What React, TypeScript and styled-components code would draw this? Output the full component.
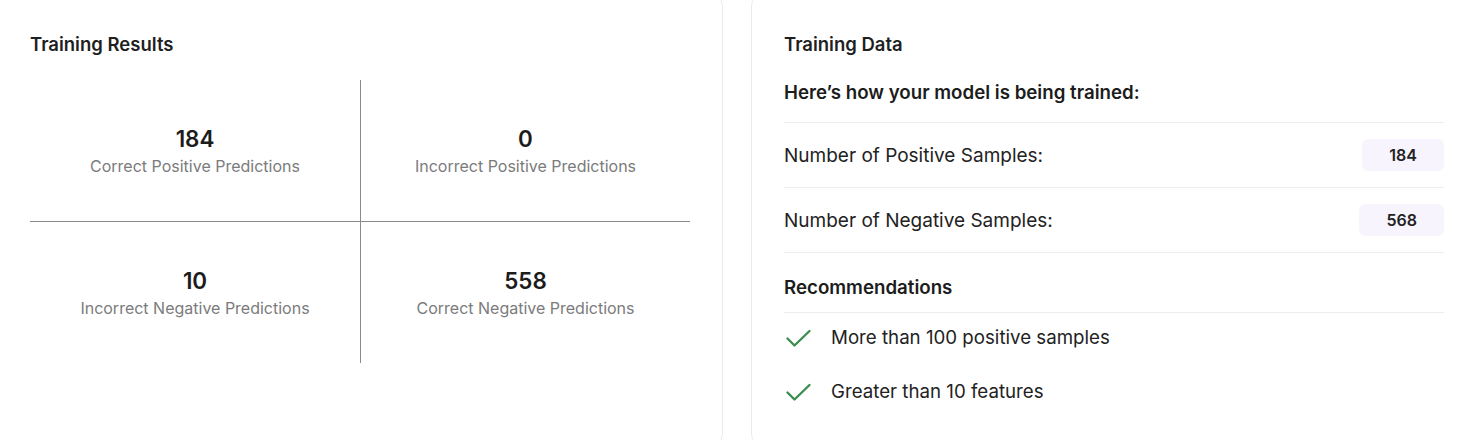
import React from 'react';
import styled, { createGlobalStyle } from 'styled-components';

const GlobalStyle = createGlobalStyle`
  html, body {
    margin: 0;
    padding: 0;
    background: #ffffff;
    overflow: hidden;
  }
  body {
    font-family: Inter, 'Noto Sans', sans-serif;
    color: #1f1f1f;
  }
`;

/* ─── layout ─── */
const Page = styled.div`
  display: flex;
  gap: 28px;
  width: 1480px;
  margin: -6px 0 0 -3px;
`;

const Card = styled.section`
  flex: 0 0 726px;
  box-sizing: border-box;
  height: 452px;
  background: #fff;
  border: 1px solid #ebebeb;
  border-radius: 12px;
  padding: 39px 32px 0 32px;
  display: flex;
  flex-direction: column;
`;

const CardTitle = styled.h2`
  margin: 0;
  font-size: 18.5px;
  line-height: 20px;
  font-weight: 600;
  color: #1f1f1f;
`;

/* ─── confusion matrix ─── */
const Matrix = styled.div`
  margin-top: 26px;
  display: grid;
  grid-template-columns: 331px 1fr;
  grid-template-rows: 142px 141px;
`;

const Cell = styled.div<{ $right?: boolean; $bottom?: boolean }>`
  display: flex;
  flex-direction: column;
  align-items: center;
  justify-content: center;
  gap: 4px;
  padding-top: 1px;
  border-right: ${p => (p.$right ? '1px solid #8a8a8a' : 'none')};
  border-bottom: ${p => (p.$bottom ? '1px solid #8a8a8a' : 'none')};
`;

const Count = styled.div`
  font-size: 22.4px;
  line-height: 26px;
  font-weight: 600;
  color: #1c1c1c;
`;

const CountLabel = styled.div`
  font-size: 16px;
  line-height: 20px;
  color: #7b7b7b;
`;

/* ─── training data ─── */
const Subtitle = styled.h3`
  margin: 28px 0 0;
  font-size: 18.7px;
  line-height: 22px;
  font-weight: 600;
  color: #1c1c1c;
`;

const SampleList = styled.div`
  margin-top: 18px;
  border-top: 1px solid #ececec;
`;

const SampleRow = styled.div`
  height: 64px;
  display: flex;
  align-items: center;
  justify-content: space-between;
  border-bottom: 1px solid #ececec;
`;

const SampleLabel = styled.span`
  font-size: 19px;
  color: #222;
`;

const Badge = styled.span`
  box-sizing: border-box;
  height: 32px;
  padding: 0 27px;
  display: inline-flex;
  align-items: center;
  border-radius: 6px;
  background: #f8f4fd;
  font-size: 16px;
  font-weight: 600;
  color: #222;
`;

const RecHeading = styled.h3`
  margin: 24px 0 0;
  padding-bottom: 13px;
  font-size: 18.7px;
  line-height: 22px;
  font-weight: 600;
  color: #1c1c1c;
  border-bottom: 1px solid #ececec;
`;

const RecList = styled.ul`
  list-style: none;
  margin: 0;
  padding: 13px 0 0;
  display: flex;
  flex-direction: column;
  gap: 30px;
`;

const RecItem = styled.li`
  display: flex;
  align-items: center;
  gap: 19px;
  line-height: 24px;
  font-size: 18.7px;
  color: #222;
`;

const CheckIcon = () => (
  <svg width="28" height="20" viewBox="0 0 28 20" fill="none" style={{ flex: 'none' }}>
    <polyline
      points="3.5,10.5 10.5,17.5 25.5,3"
      stroke="#3d8e50"
      strokeWidth="2.4"
      strokeLinecap="round"
      strokeLinejoin="round"
    />
  </svg>
);

const MATRIX = [
  { value: 184, label: 'Correct Positive Predictions', right: true, bottom: true },
  { value: 0, label: 'Incorrect Positive Predictions', right: false, bottom: true },
  { value: 10, label: 'Incorrect Negative Predictions', right: true, bottom: false },
  { value: 558, label: 'Correct Negative Predictions', right: false, bottom: false },
];

const SAMPLES = [
  { label: 'Number of Positive Samples:', value: 184 },
  { label: 'Number of Negative Samples:', value: 568 },
];

const RECOMMENDATIONS = ['More than 100 positive samples', 'Greater than 10 features'];

export default function App() {
  return (
    <>
      <GlobalStyle />
      <Page>
        <Card>
          <CardTitle>Training Results</CardTitle>
          <Matrix>
            {MATRIX.map(m => (
              <Cell key={m.label} $right={m.right} $bottom={m.bottom}>
                <Count>{m.value}</Count>
                <CountLabel>{m.label}</CountLabel>
              </Cell>
            ))}
          </Matrix>
        </Card>

        <Card>
          <CardTitle>Training Data</CardTitle>
          <Subtitle>Here’s how your model is being trained:</Subtitle>
          <SampleList>
            {SAMPLES.map(s => (
              <SampleRow key={s.label}>
                <SampleLabel>{s.label}</SampleLabel>
                <Badge>{s.value}</Badge>
              </SampleRow>
            ))}
          </SampleList>
          <RecHeading>Recommendations</RecHeading>
          <RecList>
            {RECOMMENDATIONS.map(r => (
              <RecItem key={r}>
                <CheckIcon />
                {r}
              </RecItem>
            ))}
          </RecList>
        </Card>
      </Page>
    </>
  );
}
